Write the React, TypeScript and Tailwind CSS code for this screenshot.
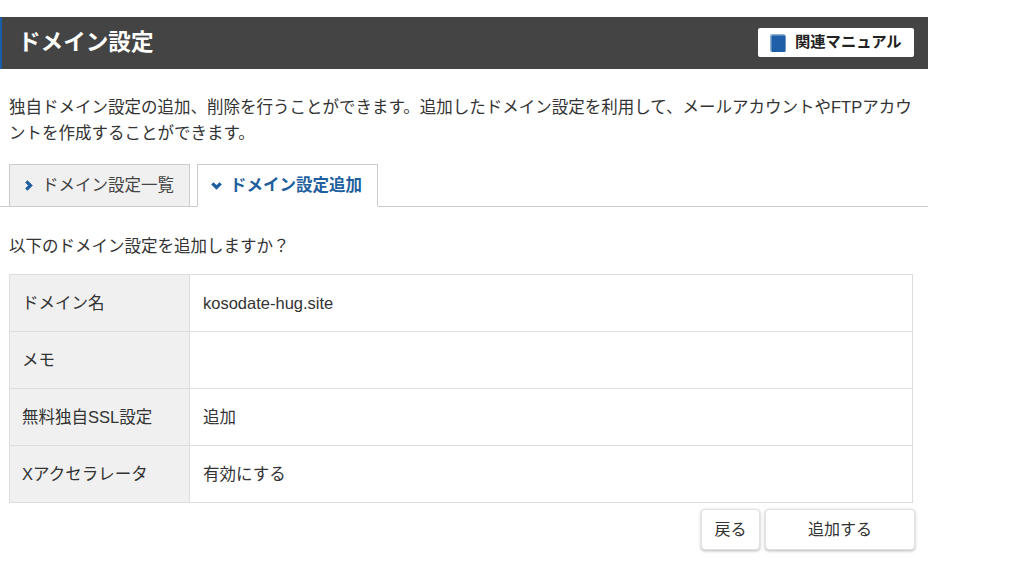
const font = "font-['Liberation_Sans','Noto_Sans_CJK_JP',sans-serif]";

const rows: [string, string][] = [
  ["ドメイン名", "kosodate-hug.site"],
  ["メモ", ""],
  ["無料独自SSL設定", "追加"],
  ["Xアクセラレータ", "有効にする"],
];

function Chevron({ down }: { down?: boolean }) {
  return (
    <svg width="11" height="11" viewBox="0 0 10 10" fill="none" stroke="#1f5f9e" strokeWidth="3">
      {down ? <path d="M1.2 3 5 6.8 8.8 3" /> : <path d="M3 1.2 6.8 5 3 8.8" />}
    </svg>
  );
}

export default function App() {
  return (
    <div className={`${font} w-[1010px] h-[581px] bg-white text-[#333] text-[16.5px] overflow-hidden pt-[17px]`}>
      <div className="w-[928px] h-[52px] bg-[#444] border-l-2 border-[#1a5ea8] flex items-center justify-between pl-[16px] pr-[14px]">
        <h1 className="text-[22.6px] font-bold text-white leading-none">ドメイン設定</h1>
        <div className="w-[156px] h-[29px] -mt-[1px] bg-white rounded-[2px] flex items-center pl-[12px] gap-[9px]">
          <svg width="16" height="18" viewBox="0 0 16 18" className="mt-[1px]">
            <rect x="0" y="0" width="15.5" height="18" rx="2" fill="#8fb0d4" />
            <rect x="1.5" y="1.5" width="14" height="16.5" rx="1" fill="#1f5fa8" />
          </svg>
          <span className="text-[15.3px] font-bold text-[#222] leading-none -mt-[2px]">関連マニュアル</span>
        </div>
      </div>

      <p className="w-[912px] mt-[25px] ml-[9px] leading-[26px]">
        独自ドメイン設定の追加、削除を行うことができます。追加したドメイン設定を利用して、メールアカウントやFTPアカウントを作成することができます。
      </p>

      <div className="w-[928px] h-[43px] mt-[18px] border-b border-[#ccc] flex items-end pl-[9px] gap-[7px]">
        <div className="w-[181px] h-[43px] -mb-px bg-[#f0f0f0] border border-[#ccc] flex items-center pl-[13px] gap-[8px]">
          <Chevron />
          <span className="text-[#444]">ドメイン設定一覧</span>
        </div>
        <div className="w-[181px] h-[43px] -mb-px bg-white border border-[#ccc] border-b-white flex items-center pl-[13px] gap-[8px]">
          <Chevron down />
          <span className="font-bold text-[#1f5f9e]">ドメイン設定追加</span>
        </div>
      </div>

      <p className="mt-[27px] ml-[9px] leading-[24px]">以下のドメイン設定を追加しますか？</p>

      <table className="mt-[16px] ml-[9px] w-[904px] border-collapse table-fixed">
        <tbody>
          {rows.map(([k, v]) => (
            <tr key={k} className="h-[57px]">
              <th className="w-[180px] bg-[#f0f0f0] border border-[#ddd] text-left font-normal pl-[12px] pt-[1px]">{k}</th>
              <td className="border border-[#ddd] pl-[13px] pt-[1px]">{v}</td>
            </tr>
          ))}
        </tbody>
      </table>

      <div className="w-[915px] flex justify-end gap-[5px] mt-[6px] text-[16px]">
        <button className="w-[59px] h-[41px] bg-white border border-[#e2e2e2] rounded-[4px] shadow-[0_1px_3px_rgba(0,0,0,0.3)]">戻る</button>
        <button className="w-[150px] h-[41px] bg-white border border-[#e2e2e2] rounded-[4px] shadow-[0_1px_3px_rgba(0,0,0,0.3)]">追加する</button>
      </div>
    </div>
  );
}
